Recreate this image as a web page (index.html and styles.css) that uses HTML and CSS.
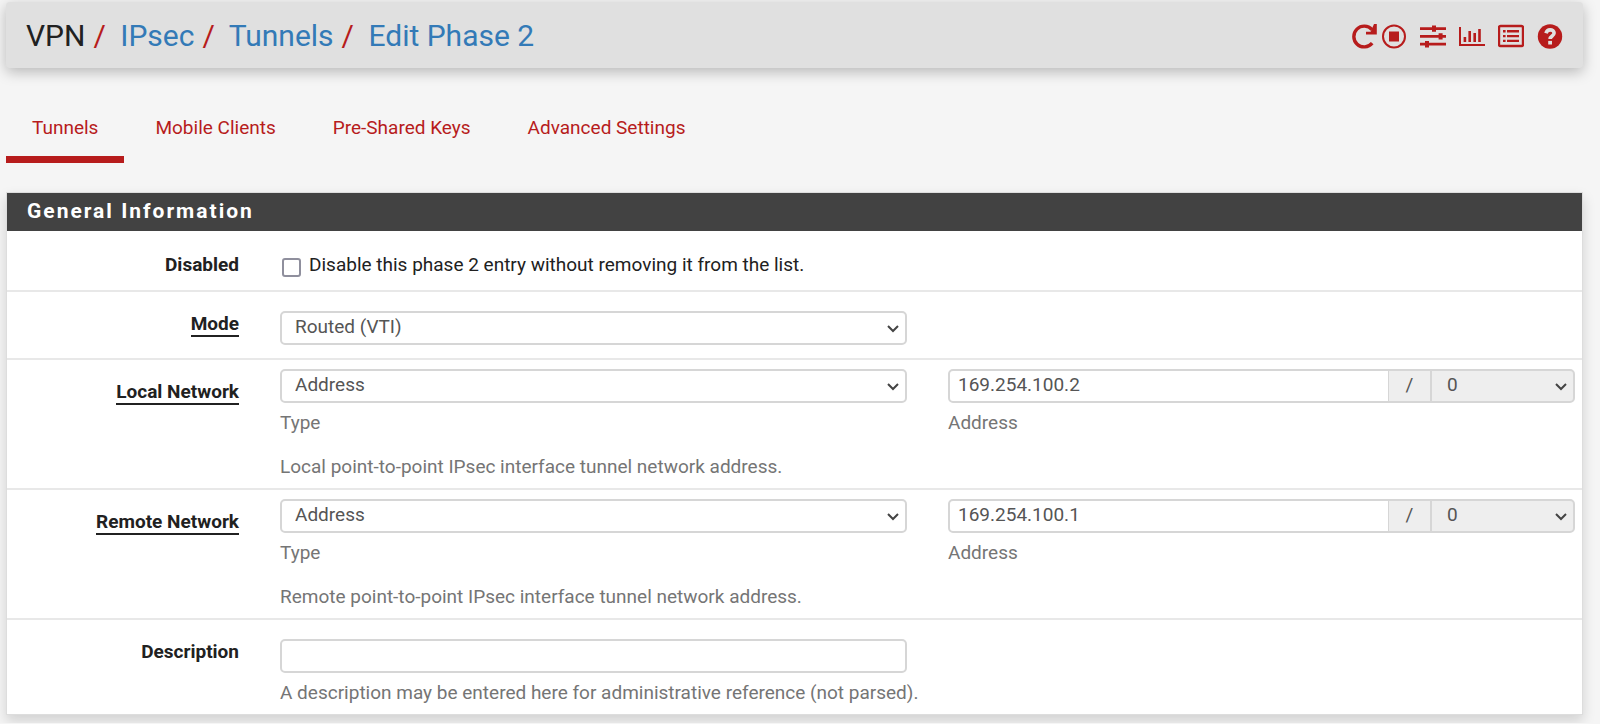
FILE: index.html
```html
<!DOCTYPE html>
<html lang="en">

<head>
	<meta charset="utf-8">
	<title>VPN: IPsec: Tunnels: Edit Phase 2</title>
	<link rel="stylesheet" href="styles.css">
</head>

<body>
	<header class="header">
		<h1 class="breadcrumb">
			<span>VPN</span><span class="slash">/</span>
			<a href="#">IPsec</a><span class="slash">/</span>
			<a href="#">Tunnels</a><span class="slash">/</span>
			<a href="#">Edit Phase 2</a>
		</h1>
		<div class="context-links">
			<a href="#" class="restart" aria-label="Restart service">
				<svg viewBox="0 0 26 26"><path d="M21.2 20.2A10.4 10.4 0 1 1 21 6.6" fill="none" stroke="currentColor" stroke-width="3.4"/><path d="M25.8 1v10.6H15V8.8h4.6L23 1z"/></svg>
			</a>
			<a href="#" aria-label="Stop service">
				<svg viewBox="0 0 26 26"><circle cx="13" cy="13.5" r="11" fill="none" stroke="currentColor" stroke-width="2"/><path d="M8 8.5h10v10H8z"/></svg>
			</a>
			<a href="#" aria-label="Related settings">
				<svg viewBox="0 0 26 26"><path d="M0 4.2h26v2.8H0zM0 12h26v2.8H0zM0 19.8h26v2.8H0zM12 2.4h4v6.4h-4zM18.6 10.2h4v6.4h-4zM5 18h4v6.4H5z"/></svg>
			</a>
			<a href="#" aria-label="Related status">
				<svg viewBox="0 0 26 26"><path d="M0 4h2v17h24v2H0zM4.6 14h2.6v5H4.6zM9.4 8H12v11H9.4zM14.4 10H17v9h-2.6zM19.2 6h2.6v13h-2.6z"/></svg>
			</a>
			<a href="#" aria-label="Related log entries">
				<svg viewBox="0 0 26 26"><rect x="1" y="3" width="24" height="20" rx="1.6" fill="none" stroke="currentColor" stroke-width="2.4"/><path d="M5 7h2.6v2.5H5zM5 11.9h2.6v2.4H5zM5 16.7h2.6v2.4H5zM9 7h12v2.5H9zM9 11.9h12v2.4H9zM9 16.7h12v2.4H9z"/></svg>
			</a>
			<a href="#" aria-label="Help">
				<svg viewBox="0 0 26 26"><circle cx="13" cy="13.5" r="12.2"/><path d="M9 10.3C9.6 7.9 11 6.9 13.1 6.9c2.3 0 4 1.3 4 3.2 0 3-4 2.8-4 6" fill="none" stroke="#e0e0e0" stroke-width="3.6"/><path d="M11.2 17.9h3.8v3.6h-3.8z" fill="#e0e0e0"/></svg>
			</a>
		</div>
	</header>

	<nav class="tabs">
		<a href="#" class="active">Tunnels</a>
		<a href="#">Mobile Clients</a>
		<a href="#">Pre-Shared Keys</a>
		<a href="#">Advanced Settings</a>
	</nav>

	<form class="panel">
		<h2 class="panel-heading">General Information</h2>

		<div class="form-group toggle">
			<label class="control-label" for="disabled">Disabled</label>
			<div class="field wide checkbox">
				<input type="checkbox" id="disabled">
				<label for="disabled">Disable this phase 2 entry without removing it from the list.</label>
			</div>
		</div>

		<div class="form-group spaced">
			<label class="control-label" for="mode"><span class="required">Mode</span></label>
			<div class="field">
				<div class="select">
					<select class="form-control" id="mode">
						<option>Routed (VTI)</option>
					</select>
					<svg viewBox="0 0 14 10"><path d="M2 2l5 5 5-5"/></svg>
				</div>
			</div>
		</div>

		<div class="form-group">
			<label class="control-label" for="localid_type"><span class="required">Local Network</span></label>
			<div class="field">
				<div class="select">
					<select class="form-control" id="localid_type">
						<option>Address</option>
					</select>
					<svg viewBox="0 0 14 10"><path d="M2 2l5 5 5-5"/></svg>
				</div>
				<label class="help" for="localid_type">Type</label>
			</div>
			<div class="field">
				<div class="input-group">
					<input type="text" class="form-control" id="localid_address" value="169.254.100.2">
					<span class="addon">/</span>
					<div class="select mask">
						<select class="form-control" aria-label="Local netmask" disabled>
							<option>0</option>
						</select>
						<svg viewBox="0 0 14 10"><path d="M2 2l5 5 5-5"/></svg>
					</div>
				</div>
				<label class="help" for="localid_address">Address</label>
			</div>
			<p class="help note">Local point-to-point IPsec interface tunnel network address.</p>
		</div>

		<div class="form-group">
			<label class="control-label" for="remoteid_type"><span class="required">Remote Network</span></label>
			<div class="field">
				<div class="select">
					<select class="form-control" id="remoteid_type">
						<option>Address</option>
					</select>
					<svg viewBox="0 0 14 10"><path d="M2 2l5 5 5-5"/></svg>
				</div>
				<label class="help" for="remoteid_type">Type</label>
			</div>
			<div class="field">
				<div class="input-group">
					<input type="text" class="form-control" id="remoteid_address" value="169.254.100.1">
					<span class="addon">/</span>
					<div class="select mask">
						<select class="form-control" aria-label="Remote netmask" disabled>
							<option>0</option>
						</select>
						<svg viewBox="0 0 14 10"><path d="M2 2l5 5 5-5"/></svg>
					</div>
				</div>
				<label class="help" for="remoteid_address">Address</label>
			</div>
			<p class="help note">Remote point-to-point IPsec interface tunnel network address.</p>
		</div>

		<div class="form-group spaced description">
			<label class="control-label" for="descr">Description</label>
			<div class="field">
				<input type="text" class="form-control" id="descr">
			</div>
			<p class="help note">A description may be entered here for administrative reference (not parsed).</p>
		</div>
	</form>
</body>

</html>
```
FILE: styles.css
```css
* {
	box-sizing: border-box;
}

body {
	margin: 0;
	padding: 2px 17px 8px 6px;
	background-color: #f5f5f5;
	color: #212121;
	font-family: Roboto, sans-serif;
	font-size: 19px;
	line-height: 28px;
}

a {
	text-decoration: none;
}

.header {
	display: flex;
	justify-content: space-between;
	align-items: center;
	height: 66px;
	padding: 2px 20px 0;
	border-radius: 4px;
	background-color: #e0e0e0;
	box-shadow: 0 4px 14px rgba(0, 0, 0, 0.25);
}

.breadcrumb {
	margin: 0;
	font-size: 30px;
	font-weight: 400;
	line-height: 36px;
}

.breadcrumb a {
	color: #337ab7;
}

.slash {
	margin: 0 7px 0 8px;
	color: #b71c1c;
}

.context-links {
	display: flex;
	gap: 13px;
}

.context-links a {
	display: flex;
	color: #b71c1c;
}

.context-links .restart {
	margin-right: -9px;
}

.context-links svg {
	width: 26px;
	height: 26px;
	fill: currentColor;
}

.tabs {
	display: flex;
	gap: 5px;
	margin: 36px 0 29px;
}

.tabs a {
	padding: 10px 26px 14px;
	border-bottom: 7px solid transparent;
	color: #b71c1c;
}

.tabs .active {
	border-bottom-color: #b71c1c;
}

.panel {
	border: 1px solid #ddd;
	background-color: #fff;
	box-shadow: 0 6px 12px rgba(0, 0, 0, 0.15);
}

.panel-heading {
	margin: 0;
	padding: 4px 20px 6px;
	background-color: #424242;
	color: #fff;
	font-size: 21px;
	font-weight: 700;
	letter-spacing: 2px;
	line-height: 28px;
}

.form-group {
	display: grid;
	grid-template-columns: 232px 1fr 1fr;
	column-gap: 41px;
	padding: 9px 7px 7px 0;
	border-bottom: 2px solid #e8e8e8;
}

.form-group:last-child {
	border-bottom: 0;
}

.toggle {
	padding-bottom: 11px;
}

.spaced {
	padding-top: 19px;
	padding-bottom: 13px;
}

.control-label {
	padding-top: 11px;
	font-weight: 700;
	line-height: 24px;
	text-align: right;
}

.toggle .control-label {
	padding-top: 13px;
}

.spaced .control-label {
	padding-top: 1px;
}

.required {
	display: inline-block;
	border-bottom: 2px solid #212121;
	line-height: 23px;
}

.wide {
	grid-column: 2 / 4;
}

.checkbox {
	display: flex;
	align-items: center;
	gap: 8px;
	padding-top: 11px;
}

.checkbox input {
	appearance: none;
	width: 19px;
	height: 19px;
	margin: 4px 0 0 2px;
	border: 2px solid #8f8f9d;
	border-radius: 3px;
	background-color: #fff;
}

.form-control {
	display: block;
	width: 100%;
	height: 34px;
	padding: 0 8px 3px;
	border: 2px solid #d6d6d6;
	border-radius: 5px;
	background-color: #fff;
	color: #555;
	font-family: inherit;
	font-size: 19px;
	line-height: 28px;
}

.select {
	position: relative;
}

.select .form-control {
	appearance: none;
	padding: 0 13px 2px;
	opacity: 1;
}

.select svg {
	position: absolute;
	top: 13px;
	right: 7px;
	width: 14px;
	height: 10px;
	fill: none;
	stroke: #444;
	stroke-width: 2;
	pointer-events: none;
}

.input-group {
	display: flex;
}

.input-group input {
	flex: 1;
	min-width: 0;
	border-right-width: 1px;
	border-radius: 5px 0 0 5px;
}

.addon {
	width: 41px;
	border: 2px solid #d6d6d6;
	border-width: 2px 0;
	background-color: #eee;
	color: #555;
	text-align: center;
}

.mask {
	width: 145px;
}

.mask .form-control {
	padding-left: 15px;
	border-radius: 0 5px 5px 0;
	background-color: #eee;
}

.help {
	display: block;
	margin: 6px 0 0;
	color: #757575;
}

.note {
	grid-column: 2 / 4;
	margin-top: 16px;
}

.description {
	padding-bottom: 7px;
}

.description .note {
	margin-top: 6px;
}
```
